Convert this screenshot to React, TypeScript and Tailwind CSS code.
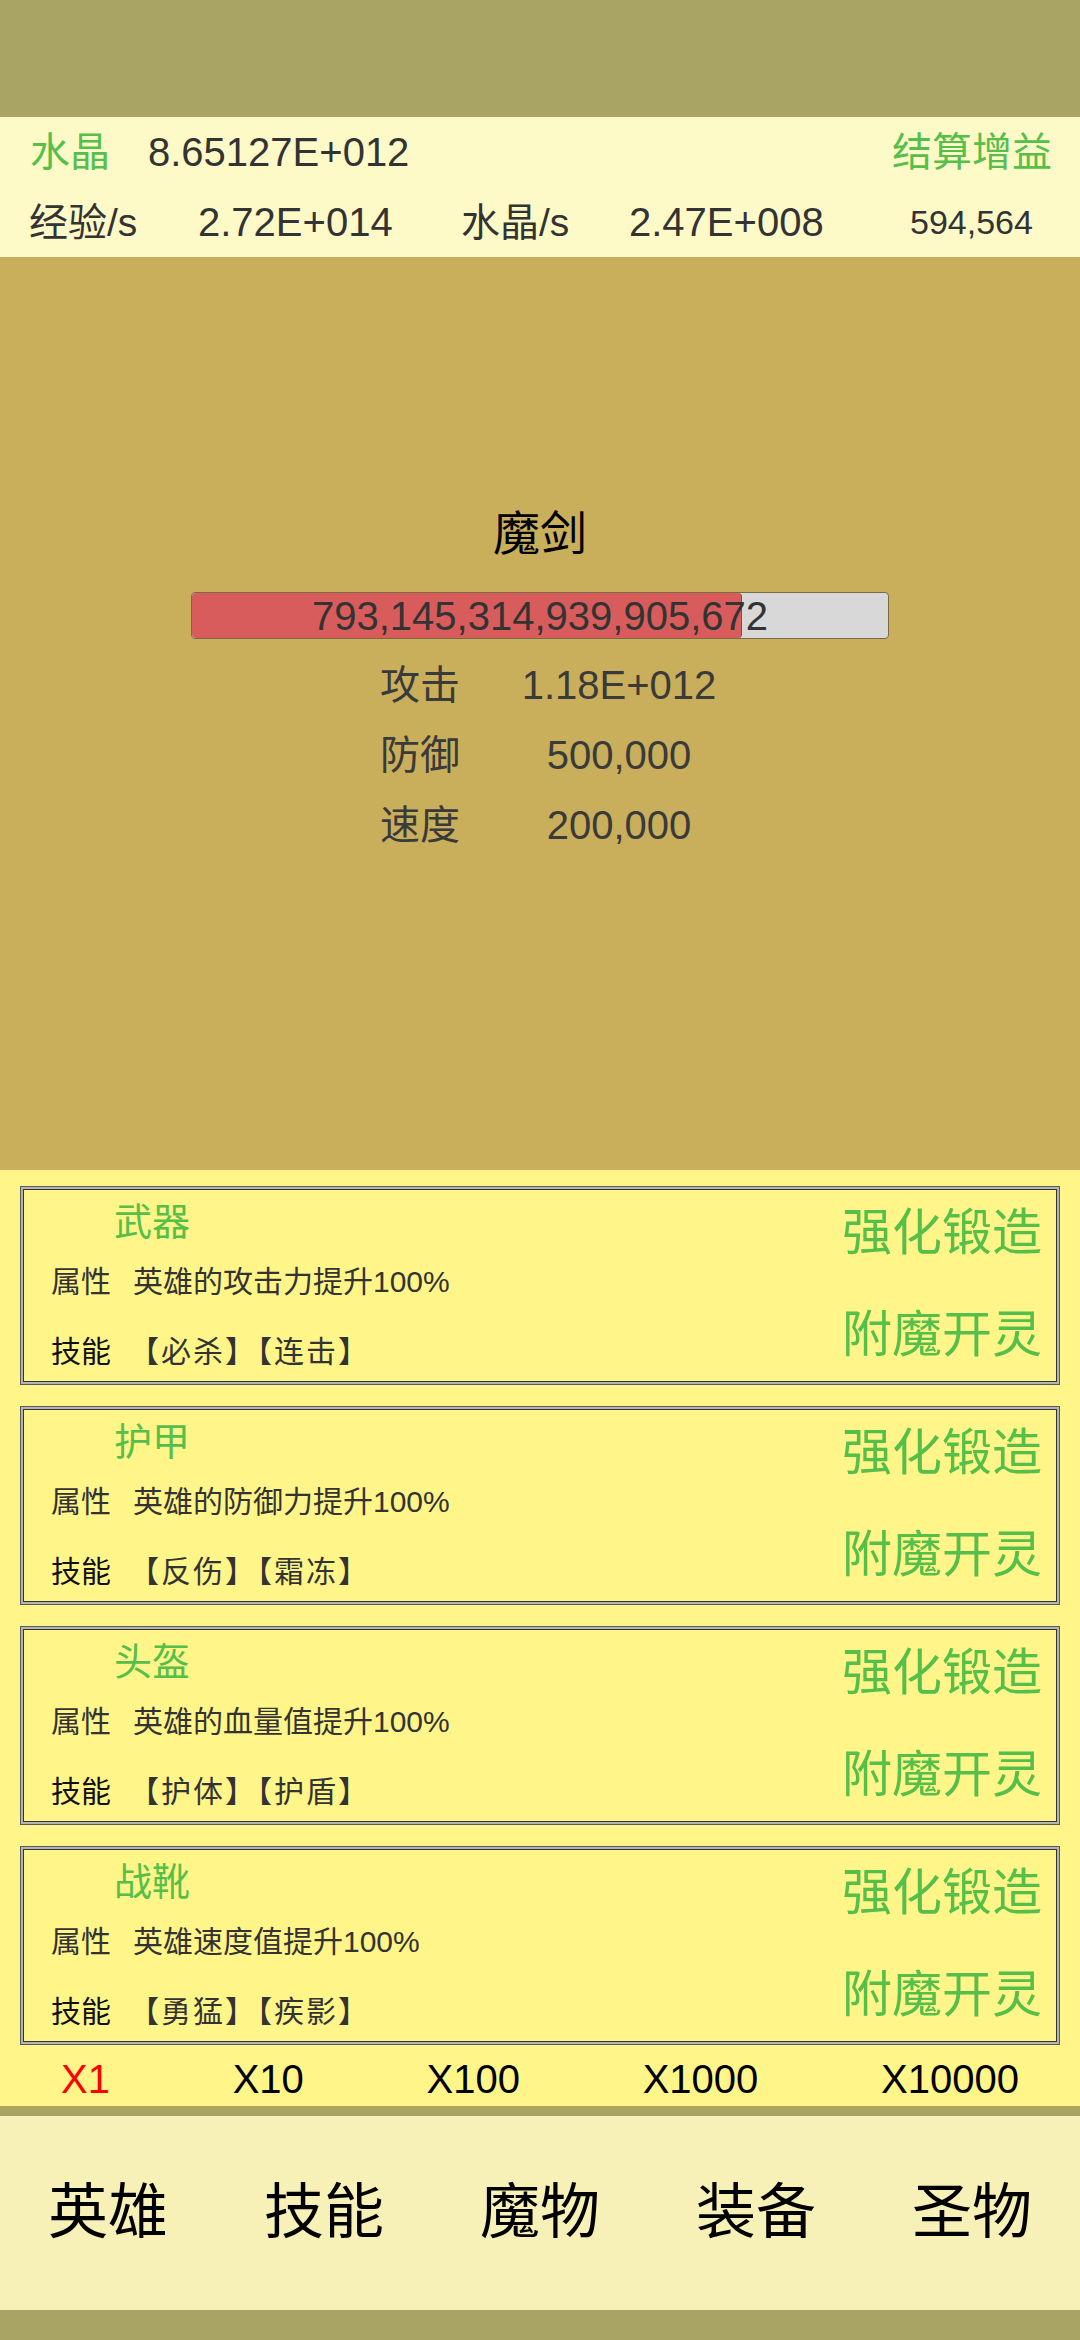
const FONT = "font-['Liberation_Sans','Noto_Sans_CJK_SC',sans-serif]";

interface Equip {
  name: string;
  attr: string;
  skills: string[];
}

const equips: Equip[] = [
  { name: '武器', attr: '英雄的攻击力提升100%', skills: ['必杀', '连击'] },
  { name: '护甲', attr: '英雄的防御力提升100%', skills: ['反伤', '霜冻'] },
  { name: '头盔', attr: '英雄的血量值提升100%', skills: ['护体', '护盾'] },
  { name: '战靴', attr: '英雄速度值提升100%', skills: ['勇猛', '疾影'] },
];

const stats = [
  { label: '攻击', value: '1.18E+012' },
  { label: '防御', value: '500,000' },
  { label: '速度', value: '200,000' },
];

const multipliers = ['X1', 'X10', 'X100', 'X1000', 'X10000'];
const tabs = ['英雄', '技能', '魔物', '装备', '圣物'];

const EquipCard: React.FC<{ item: Equip }> = ({ item }) => (
  <div className="mx-[20px] h-[199px] border border-[#5a5a5a] bg-[#b4b4b4] p-[2px]">
    <div className="flex h-full justify-between border border-[#333] bg-[#fff589]">
      <div className="flex flex-col">
        <div className="flex h-[64px] items-center pl-[90px] text-[38px] leading-none text-[#55bf4a]">
          {item.name}
        </div>
        <div className="flex h-[56px] items-center pl-[27px] text-[30px] leading-none text-[#333]">
          <span>属性</span>
          <span className="ml-[22px]">{item.attr}</span>
        </div>
        <div className="mt-[14px] flex h-[56px] items-center pl-[27px] text-[30px] leading-none">
          <span className="text-[#111]">技能</span>
          <span className="ml-[18px] tracking-[2px] text-[#333]">
            {item.skills.map((s) => `【${s}】`).join('')}
          </span>
        </div>
      </div>
      <div className="flex flex-col pr-[14px] text-[50px] leading-none text-[#55bf4a]">
        <div className="flex h-[86px] items-center">强化锻造</div>
        <div className="mt-[29px] flex h-[60px] items-center">附魔开灵</div>
      </div>
    </div>
  </div>
);

export default function App() {
  return (
    <div className={`flex h-[2340px] w-[1080px] flex-col overflow-hidden bg-[#a9a464] ${FONT}`}>
      <div className="h-[117px] shrink-0" />

      {/* resource header */}
      <div className="h-[140px] shrink-0 bg-[#fdfac8]">
        <div className="flex h-[70px] items-center px-[30px] text-[40px] leading-none">
          <span className="text-[#55bf4a]">水晶</span>
          <span className="ml-[38px] text-[#333]">8.65127E+012</span>
          <span className="ml-auto mr-[-2px] text-[#55bf4a]">结算增益</span>
        </div>
        <div className="flex h-[70px] items-center pl-[29px] leading-none text-[#333]">
          <span className="w-[169px] text-[39px]">经验/s</span>
          <span className="w-[263px] text-[40px]">2.72E+014</span>
          <span className="w-[168px] text-[39px]">水晶/s</span>
          <span className="w-[281px] text-[40px]">2.47E+008</span>
          <span className="text-[34px]">594,564</span>
        </div>
      </div>

      {/* hero panel */}
      <div className="flex h-[913px] shrink-0 flex-col items-center bg-[#c9ae5b] pt-[249px]">
        <div className="h-[56px] text-[47px] leading-[56px] text-black">魔剑</div>
        <div className="relative mt-[30px] h-[47px] w-[698px] overflow-hidden rounded-[4px] border border-[#7a6a48] bg-[#d8d8d8]">
          <div className="h-full w-[79%] rounded-[4px] border-r border-[#8a4a30] bg-[#d85c5c]" />
          <div className="absolute inset-0 flex items-center justify-center text-[40px] leading-none text-[#333]">
            793,145,314,939,905,672
          </div>
        </div>
        <div className="mt-[11px] ml-[19px] flex flex-col">
          {stats.map((s) => (
            <div key={s.label} className="flex h-[70px] items-center text-[40px] leading-none text-[#3a3a3a]">
              <span className="w-[120px] text-center">{s.label}</span>
              <span className="ml-[19px] w-[240px] text-center">{s.value}</span>
            </div>
          ))}
        </div>
      </div>

      {/* equipment list */}
      <div className="flex h-[936px] shrink-0 flex-col bg-[#fff589] pt-[16px]">
        <div className="flex flex-col gap-[21px]">
          {equips.map((e) => (
            <EquipCard key={e.name} item={e} />
          ))}
        </div>
        <div className="mt-[7px] flex h-[54px] items-center justify-between px-[61px] text-[40px] leading-none text-black">
          {multipliers.map((m, i) => (
            <span key={m} className={i === 0 ? 'text-[#ff0000]' : ''}>
              {m}
            </span>
          ))}
        </div>
      </div>

      <div className="h-[10px] shrink-0" />

      {/* bottom tabs */}
      <div className="grid h-[194px] shrink-0 grid-cols-5 items-center bg-[#f7f1b8] text-[60px] leading-none text-black">
        {tabs.map((t) => (
          <div key={t} className="text-center">
            {t}
          </div>
        ))}
      </div>
    </div>
  );
}
